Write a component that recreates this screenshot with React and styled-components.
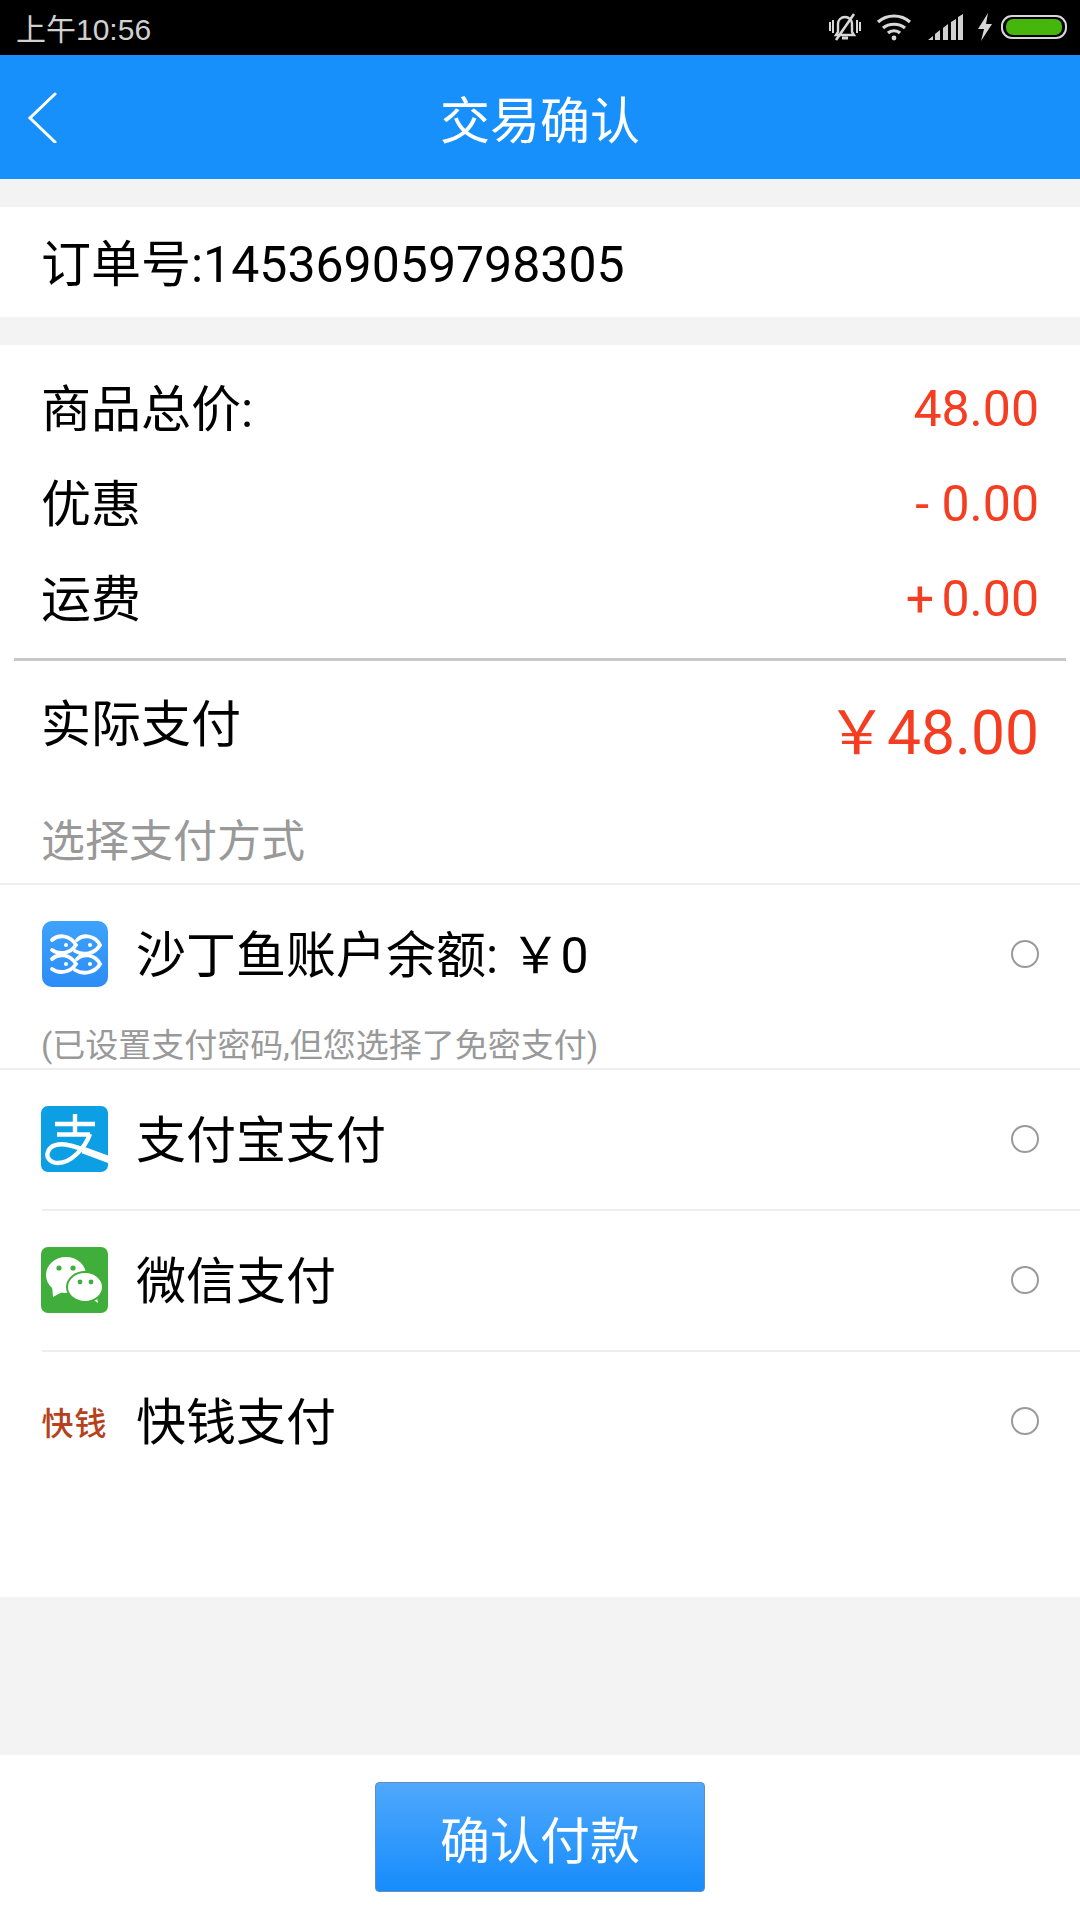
import React from 'react';
import styled, { createGlobalStyle } from 'styled-components';

const Global = createGlobalStyle`
  html, body { margin: 0; padding: 0; background: #fff; }
  body { font-family: Roboto, "Noto Sans CJK SC", sans-serif; }
`;

const Page = styled.div`
  width: 1080px;
  height: 1920px;
  display: flex;
  flex-direction: column;
  background: #f3f3f3;
  overflow: hidden;
`;

const StatusBar = styled.div`
  height: 55px;
  flex: none;
  box-sizing: border-box;
  padding: 0 13px 2px 16px;
  background: #000;
  color: #d0d0d0;
  display: flex;
  align-items: center;
  justify-content: space-between;
  font-family: "Liberation Sans", "Noto Sans CJK SC", sans-serif;
  font-size: 30px;
`;

const StatusIcons = styled.div`
  display: flex;
  align-items: center;
`;

const Header = styled.div`
  height: 124px;
  flex: none;
  background: #1890fb;
  display: flex;
  align-items: center;
  justify-content: center;
  position: relative;
  color: #fff;
  font-size: 50px;
`;

const BackIcon = styled.svg`
  position: absolute;
  left: 27px;
  top: 36px;
`;

const OrderRow = styled.div`
  margin-top: 28px;
  height: 110px;
  box-sizing: border-box;
  padding: 0 0 5px 41px;
  background: #fff;
  display: flex;
  align-items: center;
  font-size: 50px;
  color: #000;
`;

const Panel = styled.div`
  margin-top: 28px;
  height: 1252px;
  flex: none;
  background: #fff;
  padding-top: 15px;
  box-sizing: border-box;
`;

const PriceRow = styled.div`
  height: 95px;
  display: flex;
  align-items: center;
  justify-content: space-between;
  padding: 0 41px;
  font-size: 50px;
  color: #000;
`;

const PriceLabel = styled.span`
  margin-bottom: 5px;
`;

const Amount = styled.span`
  color: #f53d22;
  font-size: 50px;
  margin-top: 2px;
  word-spacing: ${p => (p.$tight ? -5 : 0)}px;
`;

const Divider = styled.div`
  height: 3px;
  margin: 13px 14px 0;
  background: #c8c8c8;
`;

const TotalRow = styled.div`
  height: 124px;
  display: flex;
  justify-content: space-between;
  padding: 0 41px;
  color: #000;
  font-size: 50px;
  line-height: 128px;
`;

const TotalAmount = styled.span`
  color: #f53d22;
  font-size: 60.5px;
  position: relative;
  top: 9px;
`;

const MethodTitle = styled.div`
  height: 100px;
  line-height: 114px;
  padding-left: 41px;
  color: #999;
  font-size: 44px;
  box-sizing: border-box;
  border-bottom: 2px solid #eeeeee;
`;

const Method = styled.div`
  height: ${p => p.$h}px;
  box-sizing: border-box;
  margin-left: ${p => (p.$inset ? 42 : 0)}px;
  padding: ${p => p.$top}px 0 0 ${p => (p.$inset ? 0 : 42)}px;
  border-bottom: ${p => (p.$line ? '2px solid #eeeeee' : 'none')};
`;

const MethodMain = styled.div`
  display: flex;
  align-items: center;
  height: 66px;
  font-size: 50px;
  color: #000;
`;

const IconBox = styled.div`
  width: 67px;
  height: 66px;
  flex: none;
  margin: 0 28px 0 -1px;
  display: flex;
  align-items: center;
  justify-content: center;
`;

const MethodName = styled.span`
  flex: 1;
  white-space: nowrap;
  margin-bottom: 6px;
`;

const Radio = styled.span`
  width: 28px;
  height: 28px;
  flex: none;
  box-sizing: border-box;
  border: 2px solid #9a9a9a;
  border-radius: 50%;
  margin-right: 41px;
`;

const Hint = styled.div`
  margin: 41px 0 0 -1px;
  font-size: 33px;
  line-height: 36px;
  color: #999;
  white-space: nowrap;
`;

const KqLogo = styled.span`
  font-family: "Noto Sans CJK SC", sans-serif;
  font-size: 32px;
  font-weight: 500;
  letter-spacing: 1px;
  color: #b5421c;
  white-space: nowrap;
`;

const Spacer = styled.div`
  flex: 1;
`;

const Footer = styled.div`
  height: 165px;
  flex: none;
  background: #fff;
  display: flex;
  justify-content: center;
  padding-top: 27px;
  box-sizing: border-box;
`;

const PayButton = styled.button`
  width: 330px;
  height: 110px;
  box-sizing: border-box;
  border: 1px solid #5f8fc0;
  border-radius: 4px;
  background: linear-gradient(180deg, #4fa8fc 0%, #168cfc 100%);
  color: #fff;
  font-family: inherit;
  font-size: 50px;
  padding: 0;
`;

const MuteIcon = () => (
  <svg width="34" height="32" viewBox="0 0 34 32" style={{ marginRight: 14 }} fill="none" stroke="#d8d8d8">
    <path d="M10 21V13c0-4 3-7 7-7s7 3 7 7v8l2 3H8z" strokeWidth="2.4" />
    <path d="M14 27h6" strokeWidth="3" />
    <path d="M26 3L8 29" strokeWidth="2.6" />
    <path d="M2 11v9M5 9v13M29 9v13M32 11v9" strokeWidth="2" />
  </svg>
);

const WifiIcon = () => (
  <svg width="36" height="28" viewBox="0 0 36 28" style={{ marginRight: 16 }} fill="none" stroke="#d8d8d8" strokeWidth="3.2">
    <path d="M2 9c9-8 23-8 32 0" />
    <path d="M7 15c6-5 16-5 22 0" />
    <path d="M12 20c3-3 9-3 12 0" />
    <circle cx="18" cy="25" r="2.4" fill="#d8d8d8" stroke="none" />
  </svg>
);

const SignalIcon = () => (
  <svg width="36" height="26" viewBox="0 0 36 26" style={{ marginRight: 13 }} fill="#d0d0d0">
    <path d="M0 26l5-4v4zM7 20l5-4v10H7zM15 14l5-4v16h-5zM23 8l5-3v21h-5zM30 3l5-3v26h-5z" />
  </svg>
);

const BoltIcon = () => (
  <svg width="16" height="28" viewBox="0 0 16 28" style={{ marginRight: 8 }} fill="#d8d8d8">
    <path d="M11 0L1 16h6l-3 12L15 11H9z" />
  </svg>
);

const BatteryIcon = () => (
  <svg width="66" height="24" viewBox="0 0 66 24">
    <rect x="1" y="1" width="64" height="22" rx="10" fill="none" stroke="#d8d8d8" strokeWidth="2" />
    <rect x="5" y="4" width="56" height="16" rx="7" fill="#46b60c" />
  </svg>
);

const FishLogo = () => (
  <svg width="66" height="66" viewBox="0 0 66 66">
    <defs>
      <linearGradient id="fishBg" x1="0" y1="0" x2="0" y2="1">
        <stop offset="0" stopColor="#3fa2fb" />
        <stop offset="1" stopColor="#2b8df5" />
      </linearGradient>
    </defs>
    <rect width="66" height="66" rx="10" fill="url(#fishBg)" />
    <g fill="none" stroke="#fff" strokeWidth="3.8" strokeLinecap="round">
      <path d="M10 19C17 13 28 14 34 24C28 33 17 34 10 29" />
      <path d="M35 19C41 13 53 14 58 24C53 33 41 35 33 30" />
      <path d="M10 38C17 32 28 33 34 43C28 52 17 53 10 48" />
      <path d="M35 38C41 32 53 33 58 43C53 52 41 54 33 49" />
    </g>
    <circle cx="24" cy="24" r="2" fill="#fff" />
    <circle cx="48" cy="24" r="2" fill="#fff" />
    <circle cx="24" cy="43" r="2" fill="#fff" />
    <circle cx="48" cy="43" r="2" fill="#fff" />
  </svg>
);

const AlipayLogo = () => (
  <svg width="67" height="66" viewBox="0 0 67 66">
    <defs>
      <clipPath id="aliClip"><rect width="67" height="66" rx="7" /></clipPath>
    </defs>
    <rect width="67" height="66" rx="7" fill="#0c9fe4" />
    <g fill="none" stroke="#fff" strokeWidth="4.4" clipPath="url(#aliClip)">
      <path d="M14 18h40M34 8v21M16 28.500h33" />
      <path d="M49 28C44 42 30 57 17 57C8 57 5 50 7 46C9 39 18 37 27 39C40 41 54 49 69 55" />
      <path d="M42 44C50 47 58 50 69 54" strokeWidth="7" />
    </g>
  </svg>
);

const WechatLogo = () => (
  <svg width="67" height="66" viewBox="0 0 67 66">
    <rect width="67" height="66" rx="7" fill="#3fae3a" />
    <ellipse cx="25" cy="28" rx="20" ry="18" fill="#fff" />
    <path d="M11 38l1 12 11-6z" fill="#fff" />
    <path d="M48 50l9 6-2-11z" fill="#fff" />
    <ellipse cx="44" cy="40" rx="18" ry="15" fill="#fff" stroke="#3fae3a" strokeWidth="2" />
    <circle cx="18" cy="21" r="2.6" fill="#3fae3a" />
    <circle cx="32" cy="21" r="2.6" fill="#3fae3a" />
    <circle cx="39" cy="35" r="2.4" fill="#3fae3a" />
    <circle cx="50" cy="35" r="2.4" fill="#3fae3a" />
  </svg>
);

const App = () => {
  return (
    <Page>
      <Global />
      <StatusBar>
        <span>上午10:56</span>
        <StatusIcons>
          <MuteIcon />
          <WifiIcon />
          <SignalIcon />
          <BoltIcon />
          <BatteryIcon />
        </StatusIcons>
      </StatusBar>
      <Header>
        <BackIcon width="32" height="52" viewBox="0 0 32 52" fill="none" stroke="#fff" strokeWidth="3" strokeLinecap="round">
          <path d="M28 3L3 27l25 24" />
        </BackIcon>
        交易确认
      </Header>
      <OrderRow>订单号:145369059798305</OrderRow>
      <Panel>
        <PriceRow><PriceLabel>商品总价:</PriceLabel><Amount>48.00</Amount></PriceRow>
        <PriceRow><PriceLabel>优惠</PriceLabel><Amount>- 0.00</Amount></PriceRow>
        <PriceRow><PriceLabel>运费</PriceLabel><Amount $tight>+ 0.00</Amount></PriceRow>
        <Divider />
        <TotalRow><span>实际支付</span><TotalAmount>￥48.00</TotalAmount></TotalRow>
        <MethodTitle>选择支付方式</MethodTitle>
        <Method $h={185} $top={36} $line>
          <MethodMain>
            <IconBox><FishLogo /></IconBox>
            <MethodName>沙丁鱼账户余额: ￥0</MethodName>
            <Radio />
          </MethodMain>
          <Hint>(已设置支付密码,但您选择了免密支付)</Hint>
        </Method>
        <Method $h={141} $top={36} $inset $line>
          <MethodMain>
            <IconBox><AlipayLogo /></IconBox>
            <MethodName>支付宝支付</MethodName>
            <Radio />
          </MethodMain>
        </Method>
        <Method $h={141} $top={36} $inset $line>
          <MethodMain>
            <IconBox><WechatLogo /></IconBox>
            <MethodName>微信支付</MethodName>
            <Radio />
          </MethodMain>
        </Method>
        <Method $h={141} $top={36} $inset>
          <MethodMain>
            <IconBox><KqLogo>快钱</KqLogo></IconBox>
            <MethodName>快钱支付</MethodName>
            <Radio />
          </MethodMain>
        </Method>
      </Panel>
      <Spacer />
      <Footer>
        <PayButton>确认付款</PayButton>
      </Footer>
    </Page>
  );
};

export default App;
